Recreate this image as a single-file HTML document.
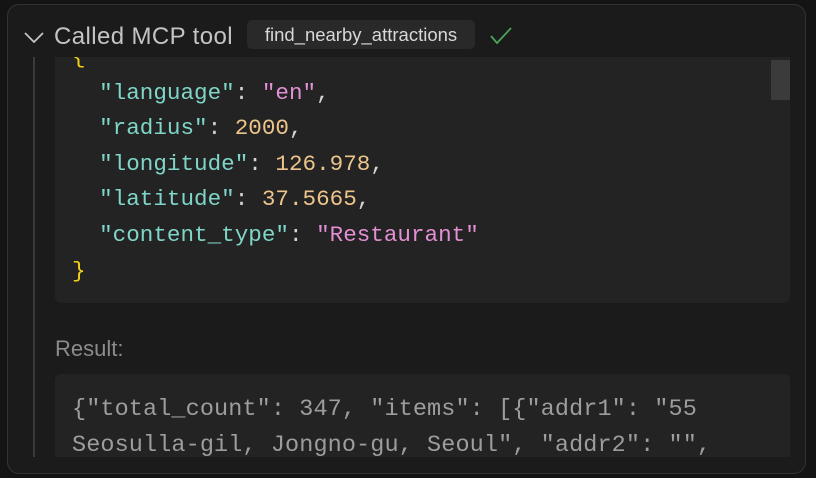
<!DOCTYPE html>
<html><head><meta charset="utf-8"><style>
html,body{margin:0;padding:0;background:#141414;width:816px;height:478px;overflow:hidden;font-family:"Liberation Sans",sans-serif}
.card{position:absolute;left:7px;top:4px;width:797px;height:468px;border:1.5px solid #333;border-radius:12px;background:#1b1b1b;overflow:hidden}
.hdr{position:absolute;left:54px;top:23px;font-size:24px;letter-spacing:0.4px;color:#c4c4c4}
.badge{position:absolute;left:247px;top:20px;width:228px;height:29px;background:#292929;border-radius:5px;color:#d8d8d8;font-size:18.5px;line-height:29px;text-align:center}
.vline{position:absolute;left:33px;top:57px;width:1.5px;height:400px;background:#3a3a3a}
.code{position:absolute;left:55px;top:57px;width:735px;height:246px;background:#232323;border-radius:0 0 6px 6px;overflow:hidden}
pre{margin:0;font-family:"Liberation Mono",monospace;font-size:22.6px;line-height:35.6px;position:absolute;left:17px;top:-17px;color:#d4d4d4}
.k{color:#7fd6c8}.s{color:#e38fd3}.n{color:#ecc48c}.b{color:#f3d01a}
.sb{position:absolute;right:0;top:3px;width:19px;height:40px;background:#3b3b3b}
.res{position:absolute;left:55px;top:336px;font-size:22px;color:#8c8c8c}
.rbox{position:absolute;left:55px;top:374px;width:735px;height:83px;background:#232323;border-radius:6px 6px 0 0;overflow:hidden}
.rbox pre{top:18px;left:17px;color:#9d9d9d;font-size:23.5px;line-height:36px;letter-spacing:0.1px}
</style></head><body>
<div class="card"></div>
<svg style="position:absolute;left:23px;top:30px" width="22" height="14" viewBox="0 0 22 14"><path d="M2 3 L11 12 L20 3" fill="none" stroke="#c4c4c4" stroke-width="1.8"/></svg>
<div class="hdr">Called MCP tool</div>
<div class="badge">find_nearby_attractions</div>
<svg style="position:absolute;left:489px;top:26px" width="24" height="20" viewBox="0 0 24 20"><path d="M2 10 L8 17 L22 2" fill="none" stroke="#4aa45a" stroke-width="1.8"/></svg>
<div class="vline"></div>
<div class="code"><pre><span class="b">{</span>
  <span class="k">"language"</span>: <span class="s">"en"</span>,
  <span class="k">"radius"</span>: <span class="n">2000</span>,
  <span class="k">"longitude"</span>: <span class="n">126.978</span>,
  <span class="k">"latitude"</span>: <span class="n">37.5665</span>,
  <span class="k">"content_type"</span>: <span class="s">"Restaurant"</span>
<span class="b">}</span></pre><div class="sb"></div></div>
<div class="res">Result:</div>
<div class="rbox"><pre>{"total_count": 347, "items": [{"addr1": "55
Seosulla-gil, Jongno-gu, Seoul", "addr2": "",</pre></div>
</body></html>
